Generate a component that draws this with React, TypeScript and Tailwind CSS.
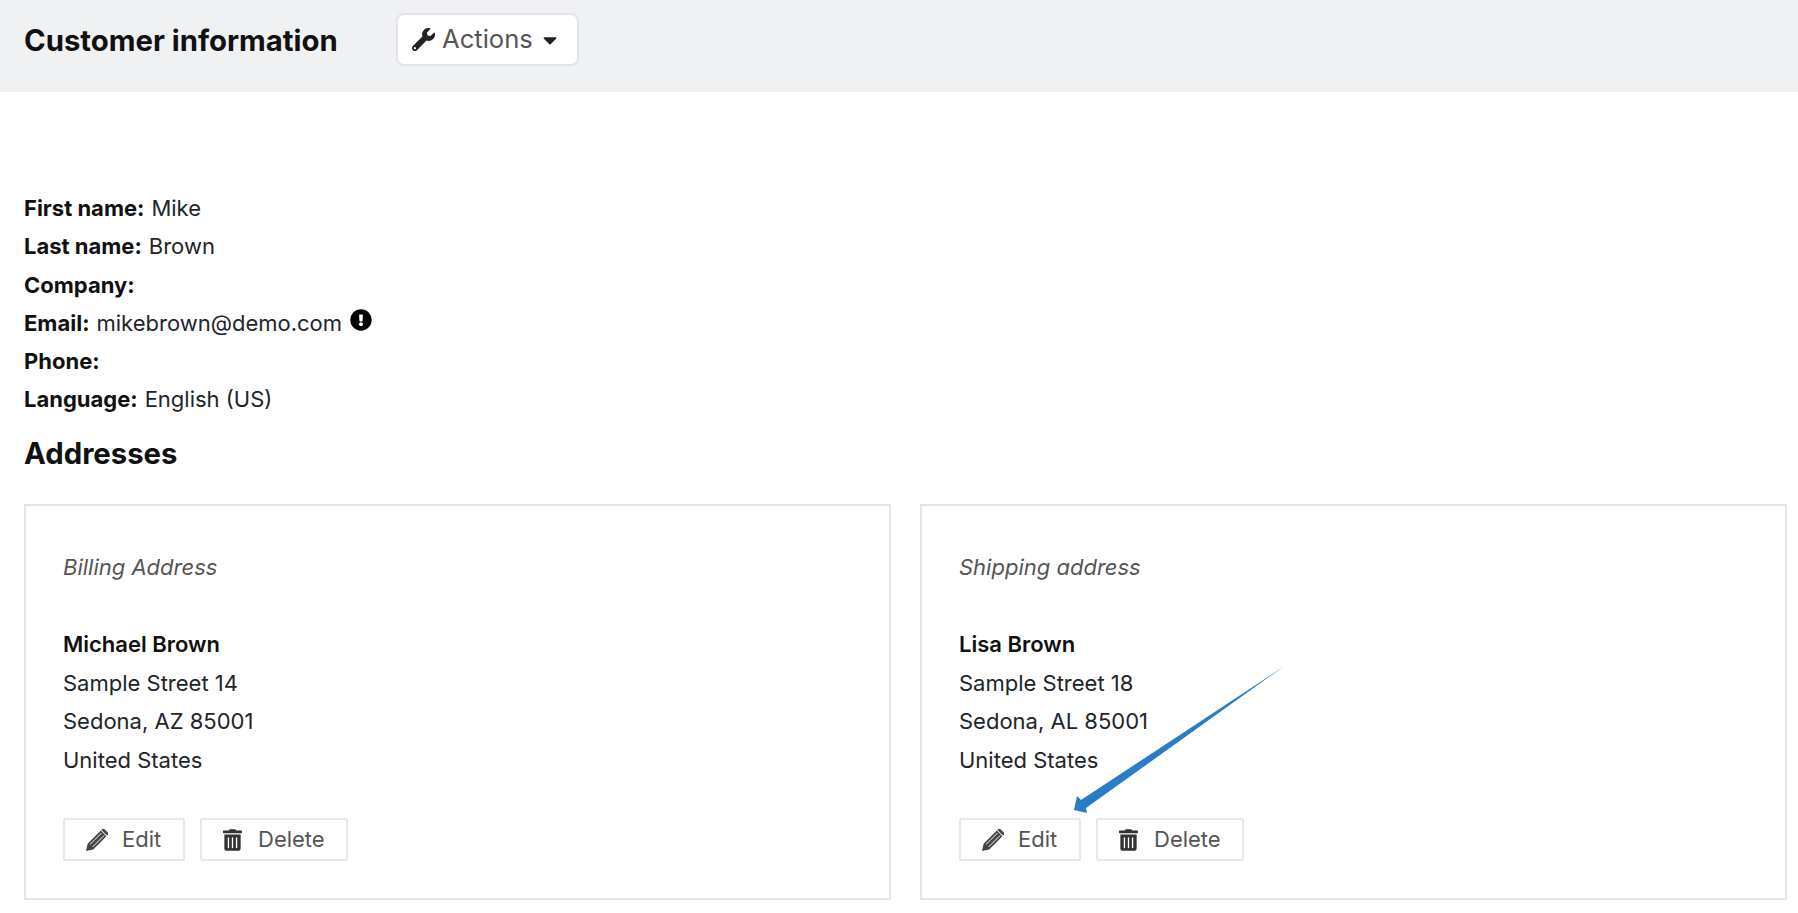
import React from 'react';
import { FaWrench, FaCaretDown, FaExclamationCircle, FaTrashAlt } from 'react-icons/fa';

const fields = [
  { label: 'First name:', value: 'Mike' },
  { label: 'Last name:', value: 'Brown' },
  { label: 'Company:', value: '' },
  { label: 'Email:', value: 'mikebrown@demo.com', warn: true },
  { label: 'Phone:', value: '' },
  { label: 'Language:', value: 'English (US)' },
];

const addresses = [
  { title: 'Billing Address', name: 'Michael Brown', street: 'Sample Street 14', city: 'Sedona, AZ 85001' },
  { title: 'Shipping address', name: 'Lisa Brown', street: 'Sample Street 18', city: 'Sedona, AL 85001' },
];

function PencilIcon() {
  return (
    <svg className="w-[24px] h-[24px]" viewBox="0 0 24 24" fill="#444">
      <path d="M1 23l1.6-7.2L15.8 2.6l5.6 5.6L8.2 21.4z" />
      <path d="M17 1.4c.8-.8 2-.8 2.8 0l2.8 2.8c.8.8.8 2 0 2.8l-.6.6-5.6-5.6z" />
      <path d="M5 16.5L16.5 5M7.5 19L19 7.5" stroke="#fff" strokeWidth="1" fill="none" />
    </svg>
  );
}

function AddressCard({ title, name, street, city }: { title: string; name: string; street: string; city: string }) {
  return (
    <div className="border-2 border-[#e5e5e5] px-[37px] pt-[46px] h-[396px]">
      <p className="italic text-[#555] leading-[30px]">{title}</p>
      <div className="mt-[43.5px] leading-[38.5px] text-[#212529]">
        <p className="font-semibold text-[#111]">{name}</p>
        <p>{street}</p>
        <p>{city}</p>
        <p>United States</p>
      </div>
      <div className="mt-[39px] flex gap-[15px]">
        <button className="flex h-[43px] w-[122px] items-center border-2 border-[#e8e8e8] rounded-[2px] pl-[20px] text-[#555]">
          <PencilIcon />
          <span className="ml-[13px]">Edit</span>
        </button>
        <button className="flex h-[43px] w-[148px] items-center border-2 border-[#e8e8e8] rounded-[2px] pl-[21px] text-[#555]">
          <FaTrashAlt className="text-[#333] w-[19px] h-[22px]" />
          <span className="ml-[16px]">Delete</span>
        </button>
      </div>
    </div>
  );
}

export default function App() {
  return (
    <div className="relative min-h-[913px] bg-white font-['Inter',sans-serif] text-[#212529] overflow-hidden text-[22px]">
      <div className="h-[92px] bg-[#f0f1f3] flex items-start pl-[24px]">
        <h1 className="mt-[19px] text-[29.3px] leading-[44px] font-bold text-[#111] w-[372px]">Customer information</h1>
        <button className="mt-[13px] flex items-center h-[53px] w-[183px] bg-white border-2 border-[#e2e4e8] rounded-[8px] pl-[14px] text-[#555] text-[25.6px]">
          <FaWrench className="text-[#222] w-[23px] h-[23px]" />
          <span className="ml-[7px]">Actions</span>
          <FaCaretDown className="ml-[6px] text-[#222] w-[22px] h-[22px]" />
        </button>
      </div>

      <div className="pl-[24px] pr-[11px] pt-[97px]">
        <div className="leading-[38.3px]">
          {fields.map(f => (
            <div key={f.label} className="flex items-center gap-[7px]">
              <span className="font-bold text-[#111]">{f.label}</span>
              <span>{f.value}</span>
              {f.warn && <FaExclamationCircle className="text-black w-[22px] h-[22px] -mt-[6px] ml-[1px]" />}
            </div>
          ))}
        </div>
        <h2 className="text-[29.3px] font-bold text-[#111] mt-[15px] leading-[40px]">Addresses</h2>
        <div className="mt-[30px] grid grid-cols-2 gap-[29px]">
          {addresses.map(a => (
            <AddressCard key={a.title} {...a} />
          ))}
        </div>
      </div>

      {/* annotation arrow */}
      <svg className="absolute left-[1060px] top-[660px]" width="230" height="160" viewBox="0 0 230 160">
        <polygon points="14,150 17,136 21,140 223,7 26,148 27,153" fill="#2b7cc4" />
      </svg>
    </div>
  );
}
